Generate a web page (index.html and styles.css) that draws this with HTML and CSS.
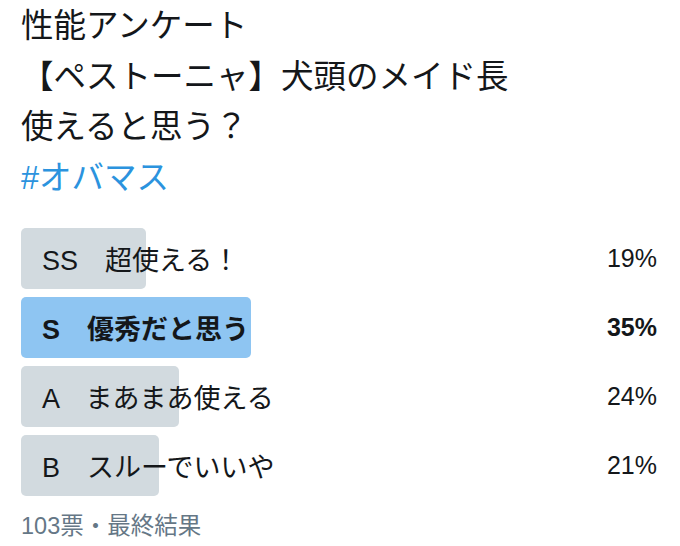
FILE: index.html
```html
<!DOCTYPE html>
<html lang="ja">
<head>
    <meta charset="UTF-8">
    <title>性能アンケート</title>
    <link rel="stylesheet" href="styles.css">
</head>
<body>
    <div class="tweet">
        <p class="tweet-text">性能アンケート<br>【ペストーニャ】犬頭のメイド長<br>使えると思う？<br><a class="hashtag" href="#">#オバマス</a></p>

        <div class="poll">
            <div class="choice">
                <div class="bar" style="width: 125px"></div>
                <span class="label">SS　超使える！</span>
                <span class="percent">19%</span>
            </div>
            <div class="choice winner">
                <div class="bar" style="width: 230px"></div>
                <span class="label">S　優秀だと思う</span>
                <span class="percent">35%</span>
            </div>
            <div class="choice">
                <div class="bar" style="width: 158px"></div>
                <span class="label">A　まあまあ使える</span>
                <span class="percent">24%</span>
            </div>
            <div class="choice">
                <div class="bar" style="width: 138px"></div>
                <span class="label">B　スルーでいいや</span>
                <span class="percent">21%</span>
            </div>
        </div>

        <div class="poll-meta">103票・最終結果</div>
    </div>
</body>
</html>
```

FILE: styles.css
```css
body {
    margin: 0;
    background-color: #ffffff;
    font-family: "Liberation Sans", "Noto Sans CJK JP", sans-serif;
    color: #14171a;
}
.tweet {
    padding: 0 23px 0 21px;
}
.tweet-text {
    margin: 0;
    padding-top: 1px;
    font-size: 32.5px;
    line-height: 50.5px;
}
.hashtag {
    color: #2b93de;
    text-decoration: none;
}
.poll {
    margin-top: 25px;
    display: flex;
    flex-direction: column;
    gap: 8px;
}
.choice {
    position: relative;
    height: 61px;
    display: flex;
    align-items: center;
    justify-content: space-between;
}
.bar {
    position: absolute;
    left: 0;
    top: 0;
    bottom: 0;
    background-color: #d2dadf;
    border-radius: 5px;
}
.winner .bar {
    background-color: #8ec5f2;
}
.winner .label,
.winner .percent {
    font-weight: bold;
}
.label {
    position: relative;
    padding-left: 21px;
    font-size: 27px;
}
.percent {
    position: relative;
    font-size: 25px;
}
.poll-meta {
    margin-top: 11px;
    font-size: 23.5px;
    color: #657786;
}
```
